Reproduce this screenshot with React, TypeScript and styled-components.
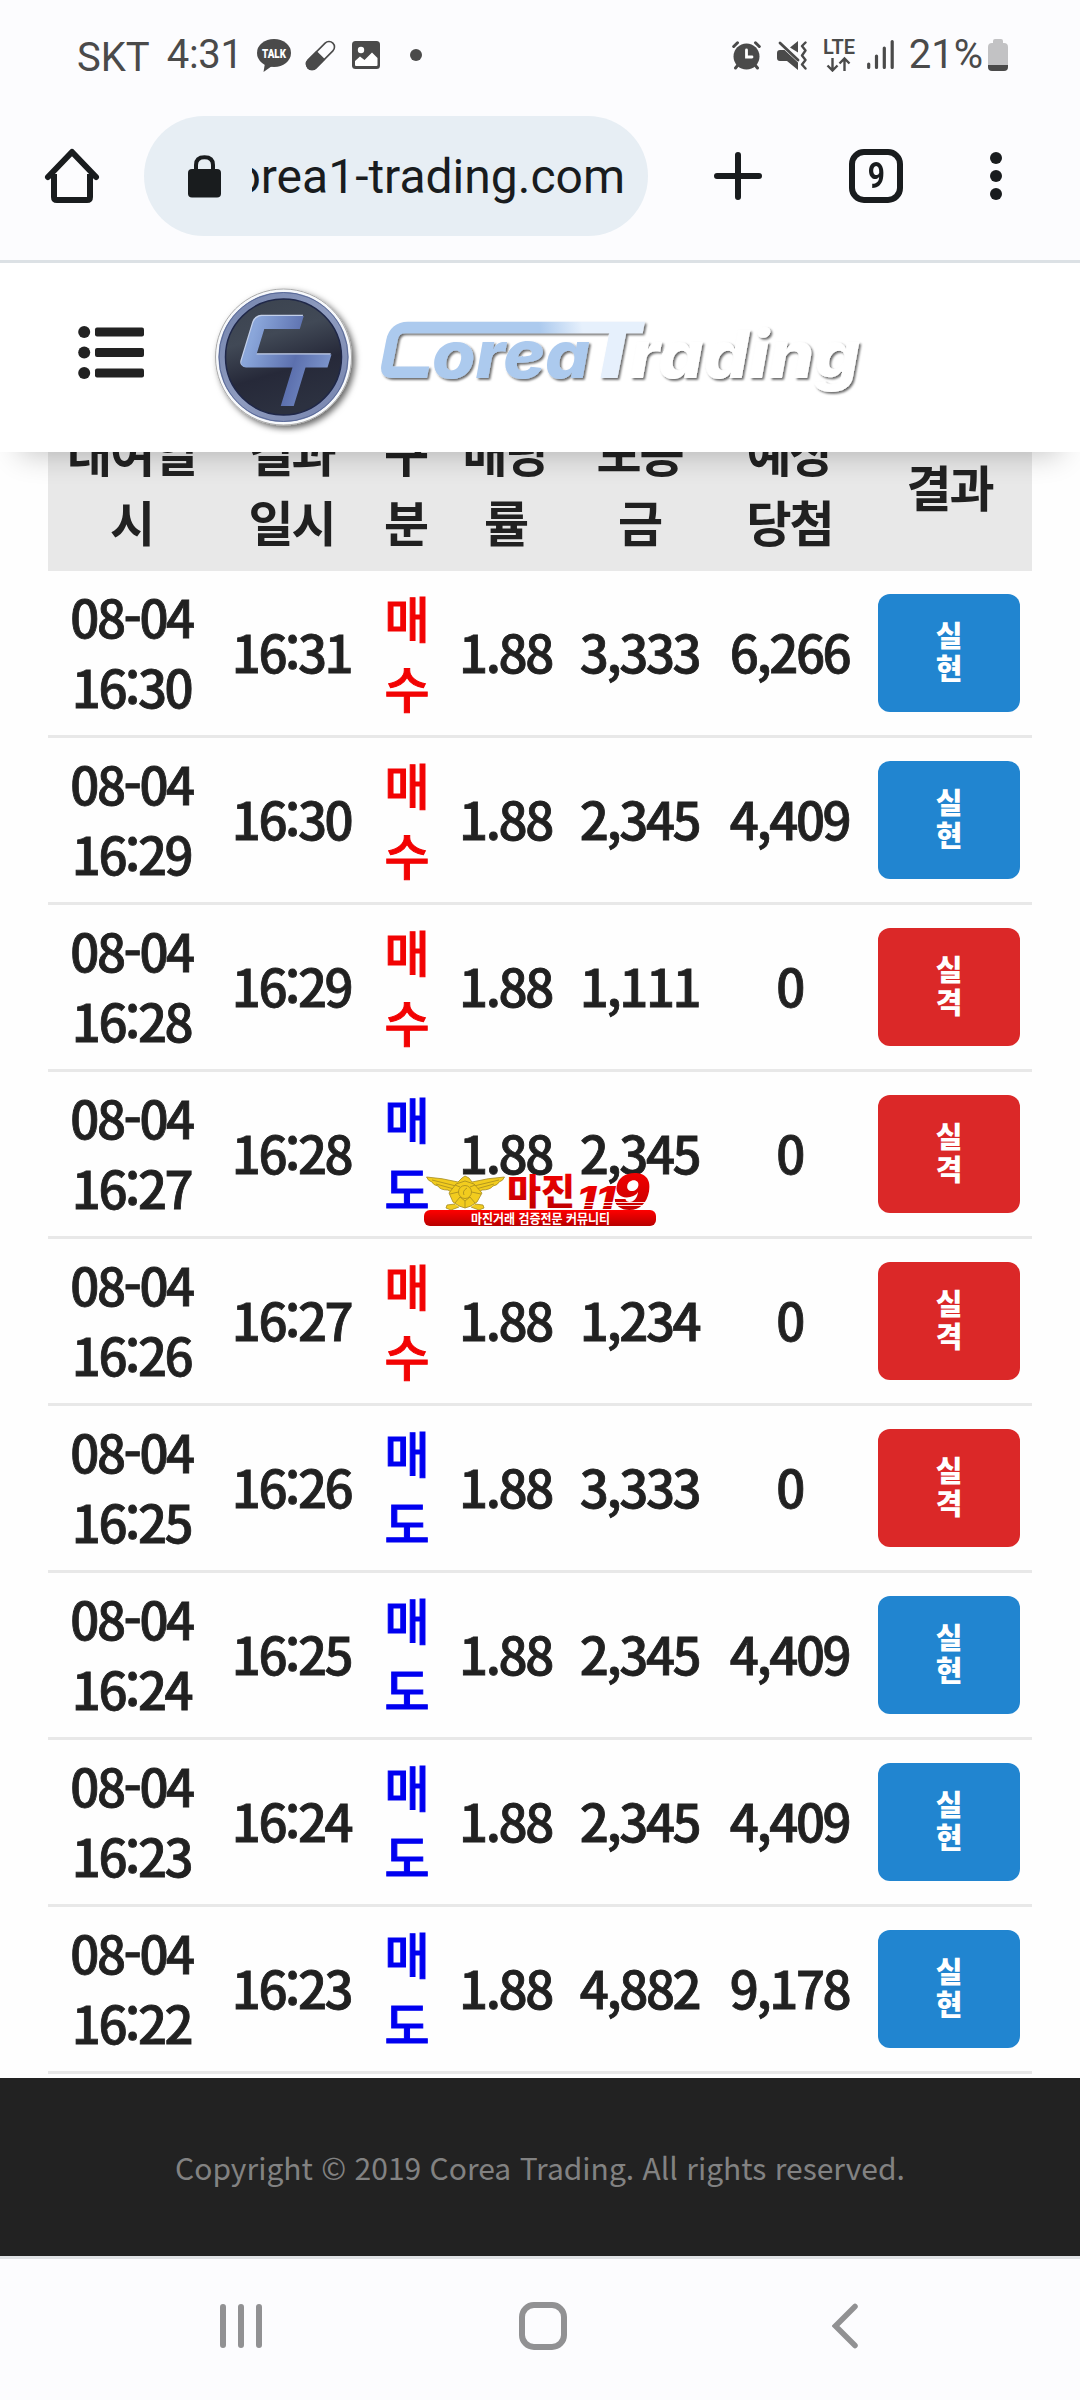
import * as React from 'react';
import styled, { createGlobalStyle } from 'styled-components';

interface IRecord {
    date: string;
    time: string;
    result: string;
    side: '매수' | '매도';
    rate: string;
    deposit: string;
    payout: string;
    win: boolean;
}

const records: IRecord[] = [
    { date: '08-04', time: '16:30', result: '16:31', side: '매수', rate: '1.88', deposit: '3,333', payout: '6,266', win: true },
    { date: '08-04', time: '16:29', result: '16:30', side: '매수', rate: '1.88', deposit: '2,345', payout: '4,409', win: true },
    { date: '08-04', time: '16:28', result: '16:29', side: '매수', rate: '1.88', deposit: '1,111', payout: '0', win: false },
    { date: '08-04', time: '16:27', result: '16:28', side: '매도', rate: '1.88', deposit: '2,345', payout: '0', win: false },
    { date: '08-04', time: '16:26', result: '16:27', side: '매수', rate: '1.88', deposit: '1,234', payout: '0', win: false },
    { date: '08-04', time: '16:25', result: '16:26', side: '매도', rate: '1.88', deposit: '3,333', payout: '0', win: false },
    { date: '08-04', time: '16:24', result: '16:25', side: '매도', rate: '1.88', deposit: '2,345', payout: '4,409', win: true },
    { date: '08-04', time: '16:23', result: '16:24', side: '매도', rate: '1.88', deposit: '2,345', payout: '4,409', win: true },
    { date: '08-04', time: '16:22', result: '16:23', side: '매도', rate: '1.88', deposit: '4,882', payout: '9,178', win: true }
];

const columns = [
    { lines: ['대여일', '시'], width: 168 },
    { lines: ['결과', '일시'], width: 152 },
    { lines: ['구', '분'], width: 76 },
    { lines: ['배당', '률'], width: 124 },
    { lines: ['보증', '금'], width: 144 },
    { lines: ['예상', '당첨'], width: 156 },
    { lines: ['결과'], width: 164 }
];

const GlobalStyle = createGlobalStyle`
    * {
        box-sizing: border-box;
    }
    body {
        margin: 0;
        background: #fefefe;
        font-family: 'Noto Sans CJK KR', 'Noto Sans', sans-serif;
    }
    svg {
        display: block;
        flex: none;
    }
`;

const Screen = styled.div`
    width: 1080px;
    height: 2400px;
    display: flex;
    flex-direction: column;
    overflow: hidden;
    position: relative;
`;

const StatusBar = styled.div`
    height: 110px;
    padding: 0 72px 0 77px;
    display: flex;
    justify-content: space-between;
    background: #fcfcfe;
    color: #4a4a4a;
    font-family: Roboto, sans-serif;
    font-size: 40px;
    line-height: 47px;
`;

const StatusGroup = styled.div`
    display: flex;
    align-items: flex-start;
    padding-top: 31px;
`;

const StatusText = styled.span<{ $left?: number; $drop?: number; $spacing?: number }>`
    margin-left: ${p => p.$left || 0}px;
    margin-top: ${p => p.$drop || 0}px;
    letter-spacing: ${p => p.$spacing || 0}px;
`;

const BrowserBar = styled.div`
    height: 153px;
    padding: 6px 66px 24px 42px;
    display: flex;
    align-items: center;
    background: #fcfcfe;
    border-bottom: 3px solid #dce1e5;
`;

const AddressPill = styled.div`
    flex: none;
    width: 504px;
    height: 120px;
    margin: 0 63px 0 42px;
    padding: 0 23px 0 44px;
    display: flex;
    align-items: center;
    border-radius: 60px;
    background: #e7eef4;
`;

const AddressText = styled.div`
    width: 373px;
    margin-left: 31px;
    padding-top: 2px;
    display: flex;
    justify-content: flex-end;
    overflow: hidden;
    white-space: nowrap;
    font-family: Roboto, sans-serif;
    font-size: 48px;
    line-height: 60px;
    color: #191c1e;
`;

const TabCount = styled.div`
    width: 54px;
    height: 54px;
    margin: 0 84px 0 84px;
    display: flex;
    align-items: center;
    justify-content: center;
    border: 6px solid #191c1e;
    border-radius: 15px;
    font-family: Roboto, sans-serif;
    font-weight: 700;
    font-size: 36px;
    line-height: 42px;
    color: #191c1e;

    span {
        transform: scaleX(0.83);
    }
`;

const SiteHeader = styled.header`
    flex: none;
    height: 189px;
    padding: 0 0 0 78px;
    display: flex;
    align-items: flex-start;
    background: #fff;
    position: relative;
    z-index: 1;
    box-shadow: 0 22px 28px -20px rgba(0, 0, 0, 0.24);
`;

const Content = styled.main`
    flex: none;
    height: 1626px;
    overflow: hidden;
    padding: 0 48px;
    background: #fefefe;
`;

const RecordTable = styled.table`
    width: 984px;
    margin-top: -49px;
    table-layout: fixed;
    border-collapse: separate;
    border-spacing: 0;
    color: #212121;
    font-size: 51px;
    line-height: 70px;
    letter-spacing: -2px;
    text-align: center;
`;

const HeadCell = styled.th<{ $width: number }>`
    width: ${p => p.$width}px;
    height: 168px;
    padding: 0 1px 2px 0;
    background: #e8e8e8;
    font-size: 49px;
    font-weight: 700;
    vertical-align: middle;
`;

const Cell = styled.td`
    height: 167px;
    padding: 0 0 2px;
    border-bottom: 3px solid #e8e8e8;
    font-weight: 500;
    vertical-align: middle;
`;

const FigureCell = styled(Cell)`
    padding: 0 1px 4px 0;
`;

const Line = styled.div`
    white-space: nowrap;
`;

const Figure = styled(Line)`
    font-size: 51px;
    letter-spacing: -2.4px;
    -webkit-text-stroke: 0.8px currentColor;
`;

const Side = styled.div<{ $sell: boolean }>`
    color: ${p => p.$sell ? '#0000f0' : '#f20303'};
    font-size: 49px;
    -webkit-text-stroke: 1px currentColor;
`;

const ResultLabel = styled.div<{ $win: boolean }>`
    width: 142px;
    height: 118px;
    margin: 2px auto 0 10px;
    padding-bottom: 4px;
    display: flex;
    flex-direction: column;
    align-items: center;
    justify-content: center;
    border-radius: 12px;
    background: ${p => p.$win ? '#2185d0' : '#db2828'};
    color: #fff;
    font-size: 29px;
    font-weight: 900;
    line-height: 33px;
    letter-spacing: 0;
`;

const Footer = styled.footer`
    flex: none;
    height: 178px;
    display: flex;
    align-items: center;
    justify-content: center;
    background: #222;
    color: #828282;
    font-size: 30px;
    line-height: 44px;
    white-space: nowrap;
`;

const NavBar = styled.nav`
    flex: none;
    height: 144px;
    padding: 0 222px 7px 220px;
    display: flex;
    align-items: center;
    background: #fcfcfe;
    border-top: 3px solid #dfe2e5;
    gap: 257px;

    svg:last-child {
        margin-left: 8px;
    }
`;

// sponsor mark floating over the table
const Watermark = styled.div`
    position: absolute;
    left: 424px;
    top: 1172px;
    z-index: 2;
`;

const TalkIcon = () => (
    <svg width="34" height="33" viewBox="0 0 34 33">
        <ellipse cx="17" cy="14" rx="17" ry="14" fill="#4a4a4a" />
        <path d="M8 24L6.500 33L15 27Z" fill="#4a4a4a" />
        <text x="17" y="18.500" textAnchor="middle" textLength="24" lengthAdjust="spacingAndGlyphs" fontFamily="Roboto, sans-serif" fontWeight="900" fontSize="12.500" fill="#fff">TALK</text>
    </svg>
);

const CapsuleIcon = () => (
    <svg width="31" height="31" viewBox="0 0 31 31">
        <g transform="rotate(45 15.500 15.500)">
            <rect x="10" y="-2" width="11" height="35" rx="5.500" fill="none" stroke="#4a4a4a" strokeWidth="1.600" />
            <path d="M9.200 15H21.800V27.500A6.300 6.300 0 0 1 9.200 27.500Z" fill="#4a4a4a" />
        </g>
    </svg>
);

const PictureIcon = () => (
    <svg width="28" height="28" viewBox="0 0 28 28">
        <rect width="28" height="28" rx="3.500" fill="#4a4a4a" />
        <circle cx="9" cy="9" r="3.200" fill="#fff" />
        <path d="M3 20L8 15.500L12.500 19L20 11.500L25.500 17V24Q25.500 25 24.500 25H4Q3 25 3 24Z" fill="#fff" />
    </svg>
);

const AlarmIcon = () => (
    <svg width="29" height="29" viewBox="0 0 29 29">
        <g stroke="#4a4a4a" strokeWidth="3" strokeLinecap="round">
            <path d="M1.700 5.500L5.500 1.800M27.300 5.500L23.500 1.800" />
            <path d="M6 24L3.500 27M23 24L25.500 27" />
        </g>
        <circle cx="14.500" cy="15.500" r="13" fill="#4a4a4a" />
        <path d="M14.500 9V16H20" fill="none" stroke="#fff" strokeWidth="2.800" strokeLinecap="round" />
    </svg>
);

const MuteIcon = () => (
    <svg width="30" height="29" viewBox="0 0 30 29">
        <path d="M21 0V11.500L13 6.500ZM0 12Q0 9 3 9H7.500L21 21.500V29L10 20H3Q0 20 0 17Z" fill="#4a4a4a" />
        <path d="M3 2L21 19" stroke="#4a4a4a" strokeWidth="2.800" strokeLinecap="round" />
        <path d="M28.500 1.500L25 5L28.500 9.500L25 14.500L28.500 19L25 23.500L28.500 27.500" fill="none" stroke="#4a4a4a" strokeWidth="2.400" strokeLinecap="round" strokeLinejoin="round" />
    </svg>
);

const LteIcon = () => (
    <svg width="33" height="33" viewBox="0 0 33 33">
        <text x="0" y="14.500" textLength="32" lengthAdjust="spacingAndGlyphs" fontFamily="Roboto, sans-serif" fontWeight="600" fontSize="20" fill="#4a4a4a">LTE</text>
        <path d="M9.500 19V31M4.500 26.500L9.500 31.500L14.500 26.500M21.500 32V20M16.500 24.500L21.500 19.500L26.500 24.500" fill="none" stroke="#4a4a4a" strokeWidth="2.400" />
    </svg>
);

const SignalIcon = () => (
    <svg width="27" height="30" viewBox="0 0 27 30" stroke="#4a4a4a" strokeWidth="3.200" strokeLinecap="round">
        <path d="M1.700 24V27.500M9.500 16V27.500M17.300 8V27.500M25.200 1.600V27.500" />
    </svg>
);

const BatteryIcon = () => (
    <svg width="20" height="32" viewBox="0 0 20 32">
        <path d="M5 2Q5 0 7 0H13Q15 0 15 2V4H16Q20 4 20 8V26H0V8Q0 4 4 4H5Z" fill="#c2c2c4" />
        <path d="M0 26H20V28Q20 32 16 32H4Q0 32 0 28Z" fill="#4a4a4a" />
    </svg>
);

const HomeIcon = () => (
    <svg width="60" height="60" viewBox="0 0 60 60">
        <path d="M6 31L30 6L54 31" fill="none" stroke="#191c1e" strokeWidth="6" strokeLinecap="round" strokeLinejoin="round" />
        <path d="M12 28V51Q12 54 15 54H45Q48 54 48 51V28" fill="none" stroke="#191c1e" strokeWidth="6" />
    </svg>
);

const LockIcon = () => (
    <svg width="33" height="43" viewBox="0 0 33 43">
        <rect y="14" width="33" height="28.500" rx="4" fill="#191c1e" />
        <path d="M8 16V10Q8 2.200 16.500 2.200T25 10V16" fill="none" stroke="#191c1e" strokeWidth="4" />
    </svg>
);

const PlusIcon = () => (
    <svg width="54" height="54" viewBox="0 0 54 54" stroke="#191c1e" strokeWidth="6" strokeLinecap="round">
        <path d="M27 6V48M6 27H48" />
    </svg>
);

const MoreIcon = () => (
    <svg width="24" height="48" viewBox="0 0 24 48" fill="#191c1e">
        <circle cx="9" cy="6" r="6" />
        <circle cx="9" cy="24" r="6" />
        <circle cx="9" cy="42" r="6" />
    </svg>
);

const MenuIcon = () => (
    <svg width="66" height="54" viewBox="0 0 66 54" fill="#222">
        {[6, 26.5, 47].map(y => (
            <g key={y}>
                <circle cx="6.200" cy={y} r="6" />
                <rect x="17" y={y - 4.5} width="49" height="9" rx="2" />
            </g>
        ))}
    </svg>
);

const Logo = () => (
    <svg width="670" height="160" viewBox="210 275 670 160">
        <defs>
            <linearGradient id="face" x1="0" y1="0" x2="0.300" y2="1">
                <stop offset="0" stopColor="#3a424e" />
                <stop offset="0.400" stopColor="#414956" />
                <stop offset="0.700" stopColor="#262939" />
                <stop offset="1" stopColor="#2c3140" />
            </linearGradient>
            <linearGradient id="ring" x1="0" y1="0" x2="1" y2="1">
                <stop offset="0" stopColor="#7484ae" />
                <stop offset="0.500" stopColor="#8f9cbf" />
                <stop offset="1" stopColor="#7583ae" />
            </linearGradient>
            <linearGradient id="mark" gradientUnits="userSpaceOnUse" x1="245" y1="0" x2="335" y2="0">
                <stop offset="0" stopColor="#8aa6da" />
                <stop offset="0.550" stopColor="#5c70ae" />
                <stop offset="1" stopColor="#7f98ce" />
            </linearGradient>
            <linearGradient id="bar" gradientUnits="userSpaceOnUse" x1="532" y1="-44" x2="570" y2="-58">
                <stop offset="0" stopColor="#accaee" />
                <stop offset="1" stopColor="#e6f0fc" />
            </linearGradient>
            <filter id="badgeShadow" x="-20%" y="-20%" width="150%" height="150%">
                <feDropShadow dx="3" dy="3" stdDeviation="3" floodColor="#000" floodOpacity="0.600" />
            </filter>
            <filter id="wordShadow" filterUnits="userSpaceOnUse" x="370" y="300" width="510" height="120">
                <feDropShadow dx="1.800" dy="1.800" stdDeviation="1.200" floodColor="#000" floodOpacity="0.600" />
            </filter>
        </defs>
        <circle cx="283.500" cy="357" r="68" fill="#f7f9fc" stroke="#aaa" strokeWidth="1" filter="url(#badgeShadow)" />
        <circle cx="283.500" cy="357" r="61.500" fill="url(#face)" stroke="url(#ring)" strokeWidth="7" />
        <circle cx="283.500" cy="357" r="64.500" fill="none" stroke="#5a6a99" strokeWidth="1" />
        <circle cx="283.500" cy="357" r="58" fill="none" stroke="#1f2748" strokeWidth="1.500" />
        <g transform="translate(-0.700 360) skewX(-17)" fill="none" stroke="#c3d0ea" strokeWidth="13.500" strokeLinejoin="round">
            <path d="M290 -38.500H248V0H329.500" />
        </g>
        <g transform="translate(0 361) skewX(-17)" fill="none" stroke="url(#mark)" strokeWidth="13" strokeLinejoin="round">
            <path d="M290 -38.500H248V0H329.500M301 0V45" />
        </g>
        <g filter="url(#wordShadow)">
            <g transform="translate(0 378) skewX(-11)" fill="none">
                <path d="M427 -5.700H392Q384.600 -5.700 384.600 -13V-38Q384.600 -50.500 397 -50.500H634" stroke="url(#bar)" strokeWidth="11.500" />
                <path d="M609 -50V0" stroke="#e6f0fc" strokeWidth="17" />
            </g>
            <text x="432" y="378" textLength="158" lengthAdjust="spacingAndGlyphs" fontFamily="Inter, sans-serif" fontWeight="800" fontStyle="italic" fontSize="66" fill="#accaee" style={{ fontFeatureSettings: '"cv11"' }}>orea</text>
            <text x="630" y="378" textLength="230" lengthAdjust="spacingAndGlyphs" fontFamily="Inter, sans-serif" fontWeight="800" fontStyle="italic" fontSize="66" fill="#fff" style={{ fontFeatureSettings: '"cv11"' }}>rading</text>
        </g>
    </svg>
);

const SponsorMark = () => (
    <svg width="234" height="56" viewBox="0 0 234 56">
        <defs>
            <linearGradient id="red" x1="0" y1="0" x2="0" y2="1">
                <stop offset="0" stopColor="#ff0000" />
                <stop offset="1" stopColor="#b80000" />
            </linearGradient>
        </defs>
        <g fill="#f2cc1e" stroke="#a58a20" strokeWidth="0.800" strokeLinejoin="round">
            <path d="M2.500 5Q18 6 34 10L38 6L41 4L45 6L48 10Q64 6 80.500 5Q79 9 75 10Q74 13 69 14Q66 18 58 18L55 20H27L24 18Q16 18 14 14Q9 13 8 10Q4 9 2.500 5Z" />
            <path d="M8 8L32 14M12 12L30 17M75 8L50 14M70 12L52 17" fill="none" />
            <path d="M31 32L23 33L22 36L27 38L35 35M51 32L59 33L60 36L55 38L47 35" />
            <path d="M32 12L25 21L29 30L35 34L41 36L47 34L53 30L58 21L50 12L41 9Z" />
            <circle cx="41" cy="20" r="6.500" />
            <path d="M34.500 20L26 22M47.500 20L57 22M36 25L31 31M46 25L51 31M36 25L41 29L46 25M41 29V36M36 15L31 13M46 15L51 13M40 23Q38 19 43 16" fill="none" />
        </g>
        <text x="83" y="32.500" textLength="68" lengthAdjust="spacingAndGlyphs" fontWeight="900" fontSize="36" fill="url(#red)">마진</text>
        <text x="153" y="37" textLength="38" lengthAdjust="spacingAndGlyphs" fontFamily="Inter, sans-serif" fontWeight="900" fontStyle="italic" fontSize="32" fill="url(#red)">11</text>
        <text x="189" y="37" textLength="37" lengthAdjust="spacingAndGlyphs" fontFamily="Inter, sans-serif" fontWeight="900" fontStyle="italic" fontSize="48" fill="url(#red)">9</text>
        <path d="M152 30.500H222M152 33.500H222" stroke="#fff" strokeWidth="0.900" />
        <rect y="38" width="232" height="16" rx="6" fill="url(#red)" />
        <text x="47" y="51" textLength="139" lengthAdjust="spacingAndGlyphs" fontWeight="700" fontSize="13" fill="#fff">마진거래 검증전문 커뮤니티</text>
    </svg>
);

const Gap = styled.div<{ $left: number; $top: number }>`
    margin-left: ${p => p.$left}px;
    margin-top: ${p => p.$top}px;
`;

const Dot = styled.div`
    width: 12px;
    height: 12px;
    border-radius: 50%;
    background: #4a4a4a;
`;

const RecordRow = ({ record }: { record: IRecord }) => (
    <tr>
        <FigureCell>
            <Figure>{record.date}</Figure>
            <Figure>{record.time}</Figure>
        </FigureCell>
        <FigureCell><Figure>{record.result}</Figure></FigureCell>
        <Cell>
            <Side $sell={record.side === '매도'}>
                {record.side.split('').map(c => <Line key={c}>{c}</Line>)}
            </Side>
        </Cell>
        <FigureCell><Figure>{record.rate}</Figure></FigureCell>
        <FigureCell><Figure>{record.deposit}</Figure></FigureCell>
        <FigureCell><Figure>{record.payout}</Figure></FigureCell>
        <Cell>
            <ResultLabel $win={record.win}>
                <Line>실</Line>
                <Line>{record.win ? '현' : '격'}</Line>
            </ResultLabel>
        </Cell>
    </tr>
);

export default function App () {
    return (
        <Screen lang="ko">
            <GlobalStyle />
            <StatusBar>
                <StatusGroup>
                    <StatusText $drop={3}>SKT</StatusText>
                    <StatusText $left={17} $spacing={-0.3}>4:31</StatusText>
                    <Gap $left={14} $top={8}><TalkIcon /></Gap>
                    <Gap $left={14} $top={9}><CapsuleIcon /></Gap>
                    <Gap $left={16} $top={10}><PictureIcon /></Gap>
                    <Gap $left={30} $top={18}><Dot /></Gap>
                </StatusGroup>
                <StatusGroup>
                    <Gap $left={0} $top={10}><AlarmIcon /></Gap>
                    <Gap $left={16} $top={10}><MuteIcon /></Gap>
                    <Gap $left={16} $top={8}><LteIcon /></Gap>
                    <Gap $left={11} $top={9}><SignalIcon /></Gap>
                    <StatusText $left={15}>21%</StatusText>
                    <Gap $left={5} $top={8}><BatteryIcon /></Gap>
                </StatusGroup>
            </StatusBar>
            <BrowserBar>
                <HomeIcon />
                <AddressPill>
                    <LockIcon />
                    <AddressText>corea1-trading.com</AddressText>
                </AddressPill>
                <PlusIcon />
                <TabCount><span>9</span></TabCount>
                <MoreIcon />
            </BrowserBar>
            <SiteHeader>
                <Gap $left={0} $top={63}><MenuIcon /></Gap>
                <Gap $left={66} $top={12}><Logo /></Gap>
            </SiteHeader>
            <Content>
                <RecordTable>
                    <thead>
                        <tr>
                            {columns.map((col, i) => (
                                <HeadCell key={i} $width={col.width}>
                                    {col.lines.map(line => <Line key={line}>{line}</Line>)}
                                </HeadCell>
                            ))}
                        </tr>
                    </thead>
                    <tbody>
                        {records.map(record => <RecordRow key={record.time} record={record} />)}
                    </tbody>
                </RecordTable>
            </Content>
            <Footer>Copyright © 2019 Corea Trading. All rights reserved.</Footer>
            <NavBar>
                <svg width="42" height="48" viewBox="0 0 42 48" stroke="#919193" strokeWidth="6" strokeLinecap="round">
                    <path d="M3 5V43M21 5V43M39 5V43" />
                </svg>
                <svg width="48" height="48" viewBox="0 0 48 48">
                    <rect x="3" y="3" width="42" height="42" rx="12" fill="none" stroke="#919193" strokeWidth="6" />
                </svg>
                <svg width="26" height="48" viewBox="0 0 26 48">
                    <path d="M23 4.500L3.500 24L23 43.500" fill="none" stroke="#919193" strokeWidth="5.500" strokeLinecap="round" />
                </svg>
            </NavBar>
            <Watermark><SponsorMark /></Watermark>
        </Screen>
    );
}
